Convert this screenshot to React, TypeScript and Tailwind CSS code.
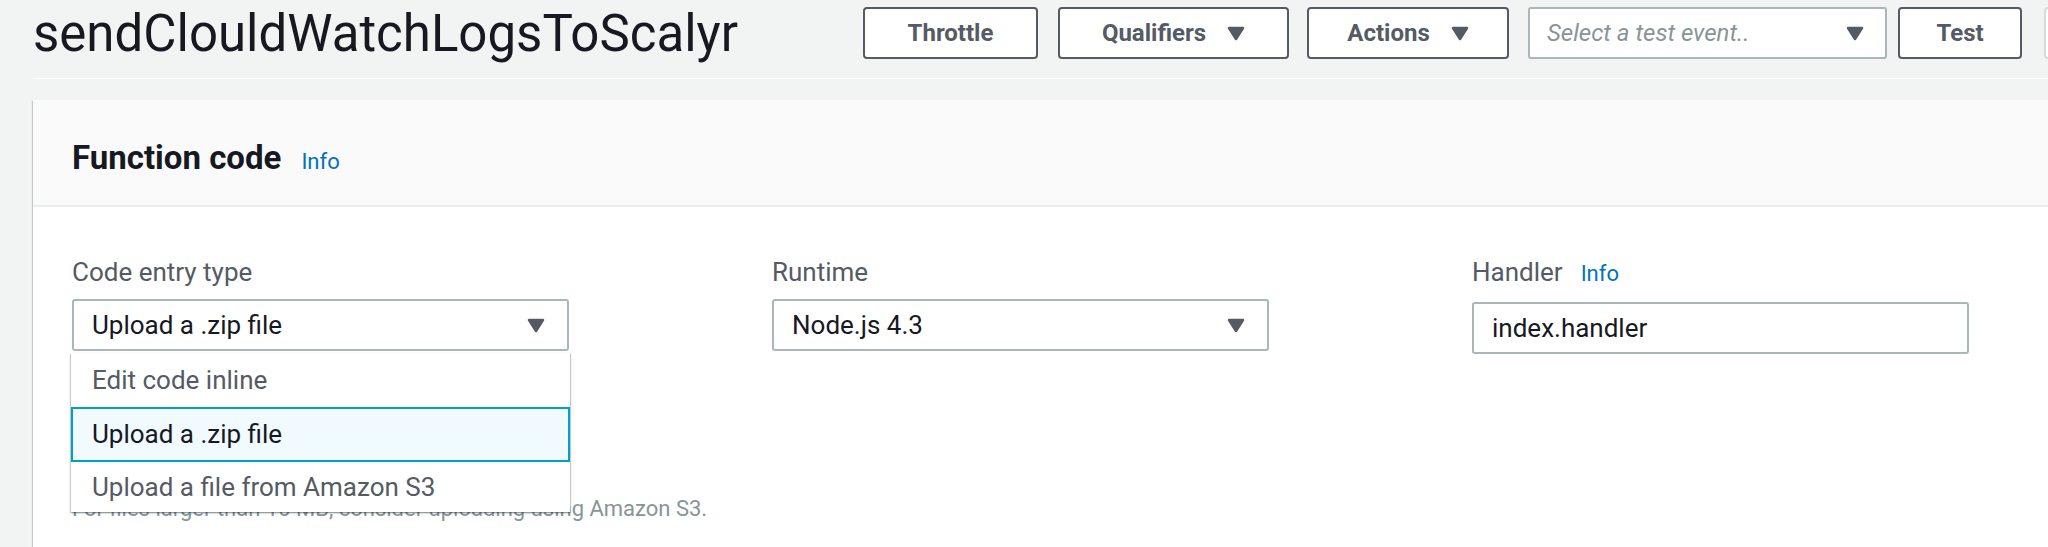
import { ReactNode } from 'react';

const font = "font-['Roboto','Liberation_Sans',sans-serif]";

function Caret({ className = '' }: { className?: string }) {
  return (
    <svg width="18" height="15" viewBox="0 0 18 15" className={className}>
      <path
        d="M2 2 L16 2 L9 13 Z"
        fill="#545b64"
        stroke="#545b64"
        strokeWidth="2.5"
        strokeLinejoin="round"
      />
    </svg>
  );
}

function HeaderButton({
  children,
  className = '',
  caret = false,
}: {
  children: ReactNode;
  className?: string;
  caret?: boolean;
}) {
  return (
    <button
      className={`h-[52px] shrink-0 flex items-center justify-center gap-[21px] rounded-[4px] border-2 border-[#545b64] bg-white text-[24px] font-bold text-[#545b64] ${className}`}
    >
      <span>{children}</span>
      {caret && <Caret />}
    </button>
  );
}

function Label({ children, info = false }: { children: ReactNode; info?: boolean }) {
  return (
    <div className="flex items-baseline gap-[18px] mb-[12px]">
      <span className="text-[26px] leading-[30px] text-[#545b64]">{children}</span>
      {info && <span className="text-[22px] text-[#0073bb]">Info</span>}
    </div>
  );
}

function SelectBox({ value }: { value: string }) {
  return (
    <div className="w-[497px] h-[52px] flex items-center justify-between rounded-[3px] border-2 border-[#aab7b8] bg-white pl-[18px] pr-[22px]">
      <span className="text-[26px] text-[#16191f]">{value}</span>
      <Caret />
    </div>
  );
}

const options = ['Edit code inline', 'Upload a .zip file', 'Upload a file from Amazon S3'];

export default function App() {
  return (
    <div className={`w-[2048px] h-[547px] overflow-hidden bg-[#f2f3f3] ${font}`}>
      <div className="w-[2200px] pl-[33px]">
        {/* 顶部：函数名 + 操作按钮 */}
        <div className="flex items-center py-[7px]">
          <h1 className="w-[830px] shrink-0 text-[51px] leading-none font-normal text-[#16191f]">
            sendClouldWatchLogsToScalyr
          </h1>
          <HeaderButton className="w-[175px]">Throttle</HeaderButton>
          <HeaderButton className="w-[231px] ml-[20px]" caret>
            Qualifiers
          </HeaderButton>
          <HeaderButton className="w-[202px] ml-[18px]" caret>
            Actions
          </HeaderButton>
          <div className="w-[359px] h-[52px] ml-[19px] shrink-0 flex items-center justify-between rounded-[3px] border-2 border-[#aab7b8] bg-white pl-[17px] pr-[21px]">
            <span className="text-[24px] italic text-[#879596]">Select a test event..</span>
            <Caret />
          </div>
          <HeaderButton className="w-[124px] ml-[11px]">Test</HeaderButton>
          <button className="w-[110px] h-[52px] ml-[22px] shrink-0 rounded-[4px] border-2 border-[#d5dbdb] bg-white text-[24px] font-bold text-[#aab7b8]">
            Save
          </button>
        </div>

        <div className="mt-[12px] h-px bg-white" />

        {/* Function code 卡片 */}
        <div className="mt-[21px] bg-white shadow-[0_1px_1px_0_rgba(0,28,36,0.3),1px_1px_1px_0_rgba(0,28,36,0.15),-1px_1px_1px_0_rgba(0,28,36,0.15)]">
          <div className="flex items-baseline gap-[20px] bg-[#fafafa] border-b-2 border-[#eaeded] pl-[39px] pt-[38px] pb-[27px]">
            <h2 className="text-[33px] leading-[40px] font-bold text-[#16191f]">Function code</h2>
            <span className="text-[22px] text-[#0073bb]">Info</span>
          </div>

          <div className="grid grid-cols-[700px_700px_700px] pl-[39px] pt-[50px] pb-[40px]">
            <div>
              <Label>Code entry type</Label>
              <div className="relative">
                <SelectBox value="Upload a .zip file" />
                {/* 下拉菜单 */}
                <div className="absolute left-[-1px] top-[54px] z-10 w-[499px] bg-white shadow-[0_1px_2px_0_rgba(0,28,36,0.3),1px_1px_1px_0_rgba(0,28,36,0.15),-1px_1px_1px_0_rgba(0,28,36,0.15)]">
                  {options.map((opt, i) =>
                    i === 1 ? (
                      <div
                        key={opt}
                        className="h-[55px] flex items-center border-2 border-[#00a1c9] bg-[#f1faff] pl-[19px] text-[26px] text-[#16191f]"
                      >
                        {opt}
                      </div>
                    ) : (
                      <div
                        key={opt}
                        className={`flex items-center pl-[21px] text-[26px] text-[#545b64] ${i === 0 ? 'h-[54px]' : 'h-[50px]'}`}
                      >
                        {opt}
                      </div>
                    )
                  )}
                </div>
              </div>
              <p className="mt-[145px] text-[22px] leading-[26px] text-[#879596] whitespace-nowrap">
                For files larger than 10 MB, consider uploading using Amazon S3.
              </p>
            </div>

            <div>
              <Label>Runtime</Label>
              <SelectBox value="Node.js 4.3" />
            </div>

            <div>
              <Label info>Handler</Label>
              <div className="w-[497px] h-[52px] flex items-center rounded-[3px] border-2 border-[#aab7b8] bg-white px-[18px]">
                <span className="text-[26px] text-[#16191f]">index.handler</span>
              </div>
            </div>
          </div>
        </div>
      </div>
    </div>
  );
}
